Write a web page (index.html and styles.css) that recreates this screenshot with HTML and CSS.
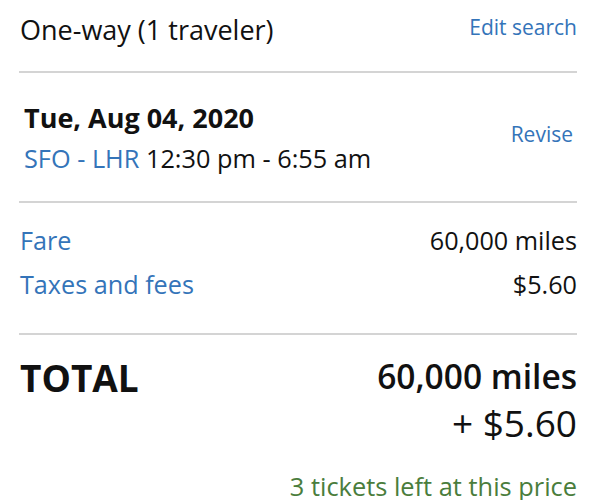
FILE: index.html
```html
<!DOCTYPE html>
<html>
<head>
<meta charset="utf-8">
<link rel="stylesheet" href="styles.css">
</head>
<body>
<div class="summary">
  <div class="header">
    <span class="trip">One-way (1 traveler)</span>
    <a class="link edit">Edit search</a>
  </div>
  <div class="segment">
    <div class="seg-info">
      <div class="date">Tue, Aug 04, 2020</div>
      <div class="route"><span class="airports">SFO - LHR</span> 12:30 pm - 6:55 am</div>
    </div>
    <a class="link revise">Revise</a>
  </div>
  <div class="costs">
    <div class="cost-row"><span class="label">Fare</span><span class="value">60,000 miles</span></div>
    <div class="cost-row"><span class="label">Taxes and fees</span><span class="value">$5.60</span></div>
  </div>
  <div class="total">
    <div class="total-label">TOTAL</div>
    <div class="total-values">
      <div class="total-miles">60,000 miles</div>
      <div class="total-cash">+ $5.60</div>
      <div class="tickets">3 tickets left at this price</div>
    </div>
  </div>
</div>
</body>
</html>
```
FILE: styles.css
```css
html, body {
  margin: 0;
  padding: 0;
  background: #fff;
}
body {
  font-family: "Open Sans", "Liberation Sans", sans-serif;
  color: #111;
}
.summary {
  width: 558px;
  margin-left: 19px;
}
.link {
  color: #3474b9;
  cursor: pointer;
}
.header {
  display: flex;
  justify-content: space-between;
  align-items: flex-start;
  height: 71px;
  border-bottom: 2px solid #d4d4d4;
}
.trip {
  font-size: 27px;
  line-height: 36px;
  margin-top: 12px;
  margin-left: 1px;
}
.edit {
  font-size: 21px;
  line-height: 28px;
  margin-top: 13px;
}
.segment {
  display: flex;
  justify-content: space-between;
  align-items: flex-start;
  height: 130px;
  box-sizing: border-box;
  padding-top: 27px;
  border-bottom: 2px solid #d4d4d4;
}
.seg-info {
  padding-left: 5px;
}
.date {
  font-size: 27px;
  font-weight: 700;
  line-height: 36px;
}
.route {
  font-size: 25.3px;
  line-height: 34px;
  margin-top: 5px;
}
.airports {
  color: #3474b9;
}
.revise {
  font-size: 21px;
  line-height: 28px;
  margin-right: 4px;
  margin-top: 20px;
}
.costs {
  height: 132px;
  border-bottom: 2px solid #d4d4d4;
  padding-top: 20px;
  box-sizing: border-box;
}
.cost-row {
  display: flex;
  justify-content: space-between;
  font-size: 25.2px;
  line-height: 34px;
  margin-bottom: 10px;
}
.label {
  color: #3474b9;
  padding-left: 1px;
}
.total {
  display: flex;
  justify-content: space-between;
  padding-top: 18px;
}
.total-label {
  font-size: 37px;
  font-weight: 700;
  line-height: 50px;
  padding-left: 1px;
}
.total-values {
  text-align: right;
}
.total-miles {
  font-size: 33.5px;
  font-weight: 600;
  line-height: 44px;
  margin-top: 1px;
}
.total-cash {
  font-size: 37px;
  line-height: 50px;
}
.tickets {
  color: #4a7d3c;
  font-size: 25.4px;
  line-height: 34px;
  margin-top: 21px;
}
```
